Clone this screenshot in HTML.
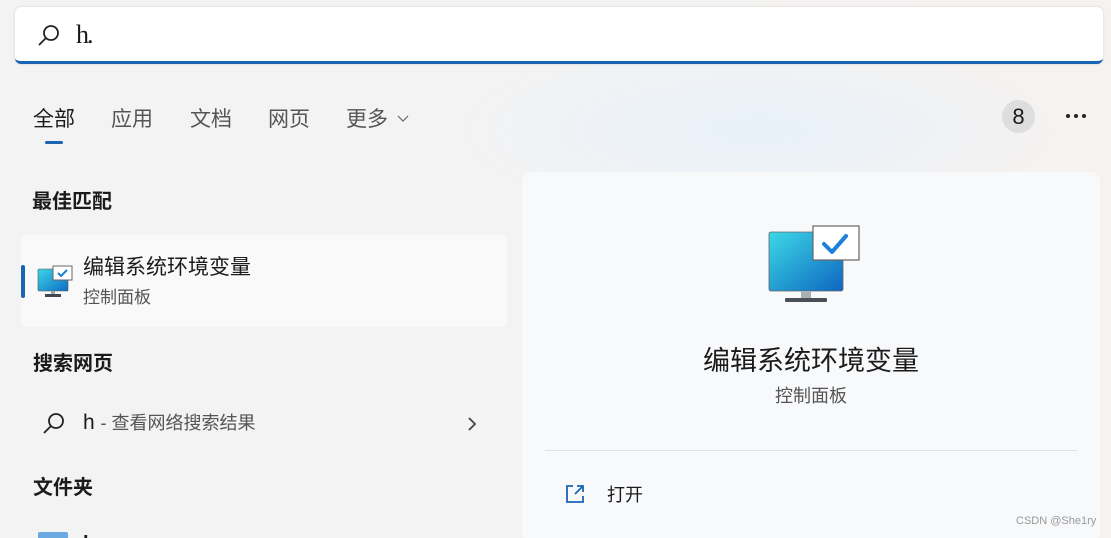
<!DOCTYPE html>
<html><head><meta charset="utf-8"><style>
*{margin:0;padding:0;box-sizing:border-box}
html,body{width:1111px;height:538px;overflow:hidden}
body{position:relative;font-family:"Liberation Sans","Microsoft YaHei","Noto Sans CJK SC",sans-serif;color:#1b1b1b;
background:radial-gradient(ellipse 300px 90px at 760px 130px,#e8f1f9,transparent),linear-gradient(90deg,#f3f3f3 0%,#f3f3f3 60%,#f6f2f0 100%)}
.a{position:absolute;white-space:nowrap}
.h{font-weight:bold;font-size:20px}
</style></head><body>
<div class="a" style="left:15px;top:7px;width:1088px;height:57px;background:#fff;border-radius:6px;border-bottom:3px solid #1a64b4;box-shadow:0 0 2px rgba(0,0,0,.15)"></div>
<svg class="a" style="left:36px;top:23px" width="26" height="26" viewBox="0 0 26 26"><circle cx="15" cy="10" r="7" fill="none" stroke="#222" stroke-width="1.8"/><line x1="10" y1="15" x2="3" y2="22" stroke="#222" stroke-width="1.8"/></svg>
<div class="a" style="left:76px;top:20px;font-size:26px;font-family:'Liberation Serif',serif;letter-spacing:-2px">h.</div>

<div class="a" style="left:33px;top:103px;font-size:21px;color:#1b1b1b">全部</div>
<div class="a" style="left:45px;top:141px;width:18px;height:3px;border-radius:2px;background:#1a64b4"></div>
<div class="a" style="left:111px;top:103px;font-size:21px;color:#555">应用</div>
<div class="a" style="left:190px;top:103px;font-size:21px;color:#555">文档</div>
<div class="a" style="left:268px;top:103px;font-size:21px;color:#555">网页</div>
<div class="a" style="left:346px;top:103px;font-size:21px;color:#555">更多</div>
<svg class="a" style="left:397px;top:115px" width="12" height="8"><path d="M1 1l5 5 5-5" fill="none" stroke="#666" stroke-width="1.2"/></svg>

<div class="a" style="left:1002px;top:100px;width:33px;height:33px;border-radius:50%;background:#dedede;font-size:22px;text-align:center;line-height:33px">8</div>
<svg class="a" style="left:1064px;top:112px" width="24" height="8"><circle cx="4" cy="4" r="2" fill="#222"/><circle cx="12" cy="4" r="2" fill="#222"/><circle cx="20" cy="4" r="2" fill="#222"/></svg>

<div class="a h" style="left:32px;top:185px">最佳匹配</div>
<div class="a" style="left:21px;top:235px;width:486px;height:92px;background:#f9f9f9;border-radius:6px"></div>
<div class="a" style="left:21px;top:265px;width:4px;height:33px;border-radius:2px;background:#1a64b4"></div>
<svg class="a" style="left:37px;top:264px" width="36" height="34" viewBox="0 0 36 34"><defs><linearGradient id="g" x1="0" y1="0" x2="1" y2="1"><stop offset="0" stop-color="#3cd6e6"/><stop offset="1" stop-color="#0e6ec4"/></linearGradient></defs><rect x="1" y="5" width="30" height="22" rx="1" fill="url(#g)" stroke="#555" stroke-width=".6"/><rect x="14" y="27" width="4" height="3" fill="#9aa"/><rect x="8" y="30" width="16" height="3" fill="#445"/><rect x="16" y="2" width="19" height="14" fill="#fff" stroke="#666"/><path d="M21 9l3 3 6-6" fill="none" stroke="#1a7fd8" stroke-width="2"/></svg>
<div class="a" style="left:83px;top:251px;font-size:21px">编辑系统环境变量</div>
<div class="a" style="left:83px;top:283px;font-size:17px;color:#555">控制面板</div>

<div class="a h" style="left:33px;top:347px">搜索网页</div>
<svg class="a" style="left:42px;top:412px" width="24" height="24" viewBox="0 0 24 24"><circle cx="14" cy="9" r="7" fill="none" stroke="#222" stroke-width="1.8"/><line x1="9" y1="14" x2="2" y2="21" stroke="#222" stroke-width="1.8"/></svg>
<div class="a" style="left:83px;top:409px;font-size:21px">h <span style="font-size:18px;color:#555">- 查看网络搜索结果</span></div>
<svg class="a" style="left:467px;top:416px" width="10" height="16"><path d="M2 2l6 6-6 6" fill="none" stroke="#444" stroke-width="1.8"/></svg>

<div class="a h" style="left:33px;top:471px">文件夹</div>
<div class="a" style="left:38px;top:532px;width:30px;height:10px;background:#6aa8e0;border-radius:2px"></div>
<div class="a" style="left:83px;top:533px;font-size:20px;font-weight:bold">h</div>

<div class="a" style="left:522px;top:172px;width:578px;height:370px;background:#f8f9fb;border-radius:9px"></div>
<svg class="a" style="left:768px;top:224px" width="94" height="84" viewBox="0 0 94 84"><defs><linearGradient id="g2" x1="0" y1="0" x2="1" y2="1"><stop offset="0" stop-color="#3cd8e6"/><stop offset="1" stop-color="#0e66c0"/></linearGradient></defs><rect x="1" y="8" width="74" height="59" rx="2" fill="url(#g2)" stroke="#666" stroke-width=".8"/><rect x="33" y="67" width="10" height="8" fill="#a9b0b8"/><rect x="17" y="74" width="42" height="4" rx="1" fill="#4a5058"/><rect x="45" y="2" width="46" height="34" fill="#fff" stroke="#666" stroke-width="1.2"/><path d="M56 20l8 8 14-16" fill="none" stroke="#1d80db" stroke-width="4" stroke-linecap="round" stroke-linejoin="round"/></svg>
<div class="a" style="left:522px;width:578px;top:339px;text-align:center;font-size:27px">编辑系统环境变量</div>
<div class="a" style="left:522px;width:578px;top:382px;text-align:center;font-size:18px;color:#555">控制面板</div>
<div class="a" style="left:545px;top:450px;width:532px;height:1px;background:#e2e2e2"></div>
<svg class="a" style="left:564px;top:483px" width="22" height="22" viewBox="0 0 22 22"><path d="M9 3H3v16h16v-6" fill="none" stroke="#1a64b4" stroke-width="1.8"/><path d="M11 11l8-8M13 3h6v6" fill="none" stroke="#1a64b4" stroke-width="1.8"/></svg>
<div class="a" style="left:607px;top:481px;font-size:18px">打开</div>
<div class="a" style="left:1016px;top:515px;font-size:11px;color:#999">CSDN @She1ry</div>
</body></html>
